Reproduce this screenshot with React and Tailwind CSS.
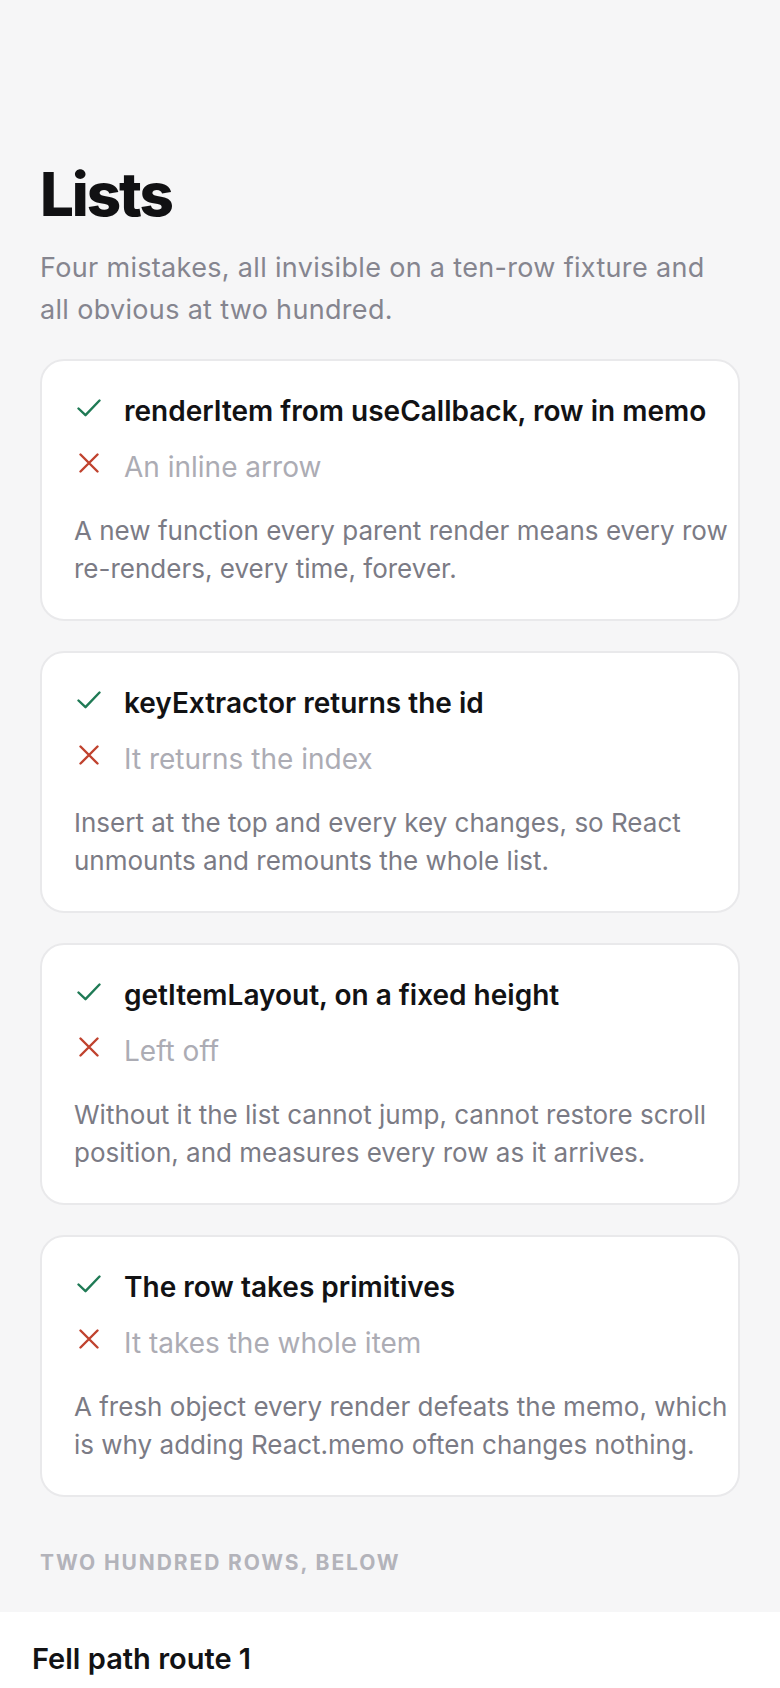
import React from "react";

const items = [
  {
    good: "renderItem from useCallback, row in memo",
    bad: "An inline arrow",
    note: "A new function every parent render means every row re-renders, every time, forever.",
  },
  {
    good: "keyExtractor returns the id",
    bad: "It returns the index",
    note: "Insert at the top and every key changes, so React unmounts and remounts the whole list.",
  },
  {
    good: "getItemLayout, on a fixed height",
    bad: "Left off",
    note: "Without it the list cannot jump, cannot restore scroll position, and measures every row as it arrives.",
  },
  {
    good: "The row takes primitives",
    bad: "It takes the whole item",
    note: "A fresh object every render defeats the memo, which is why adding React.memo often changes nothing.",
  },
];

function CheckIcon() {
  return (
    <svg width="24" height="18" viewBox="0 0 24 18" fill="none">
      <path d="M1.5 9.5 L8.5 16.2 L22.5 1.5" stroke="#1f7a55" strokeWidth="2.4" strokeLinecap="round" strokeLinejoin="round" />
    </svg>
  );
}

function XIcon() {
  return (
    <svg width="20" height="20" viewBox="0 0 20 20" fill="none">
      <path d="M1.5 1.5 L18.5 18.5 M18.5 1.5 L1.5 18.5" stroke="#c0422e" strokeWidth="2.4" strokeLinecap="round" />
    </svg>
  );
}

function Card({ good, bad, note }) {
  return (
    <div className="bg-white border-2 border-[#e9e9eb] rounded-[24px] pl-8 pr-[2px] pt-8 pb-[31px]">
      <div className="flex flex-col gap-5">
        <div className="flex items-start gap-5">
          <div className="w-[30px] h-[36px] flex justify-center pt-[6px] shrink-0">
            <CheckIcon />
          </div>
          <div className="text-[28px] leading-[36px] font-semibold text-[#121214] whitespace-nowrap">{good}</div>
        </div>
        <div className="flex items-start gap-5">
          <div className="w-[30px] h-[36px] flex justify-center pt-[4px] shrink-0">
            <XIcon />
          </div>
          <div className="text-[28px] leading-[36px] text-[#acacb4]">{bad}</div>
        </div>
      </div>
      <p className="mt-[27px] text-[26px] leading-[38px] text-[#7b7b85]">{note}</p>
    </div>
  );
}

export default function App() {
  return (
    <div
      className="h-[1688px] overflow-hidden bg-[#f6f6f7]"
      style={{ fontFamily: "Inter, 'Noto Sans', sans-serif" }}
    >
      <div className="px-10 pt-[165px]">
        <h1 className="text-[60px] leading-[58px] font-extrabold tracking-[-0.035em] text-[#111113]">Lists</h1>
        <p className="mt-6 text-[27px] leading-[42px] tracking-[0.012em] text-[#85858f]">
          Four mistakes, all invisible on a ten-row fixture and all obvious at two hundred.
        </p>
        <div className="mt-[28px] flex flex-col gap-[30px]">
          {items.map((it) => (
            <Card key={it.good} {...it} />
          ))}
        </div>
        <div className="mt-[52px] text-[21px] leading-[28px] font-bold tracking-[0.09em] text-[#b3b3ba]">
          TWO HUNDRED ROWS, BELOW
        </div>
      </div>
      <div className="mt-[35px] bg-white px-8 pt-[29px]">
        <div className="text-[29px] leading-[36px] font-semibold text-[#121214]">Fell path route 1</div>
        <div className="mt-1 text-[22px] leading-[30px] text-[#8a8a93]">Stage 1 · 4.2 km</div>
      </div>
    </div>
  );
}
